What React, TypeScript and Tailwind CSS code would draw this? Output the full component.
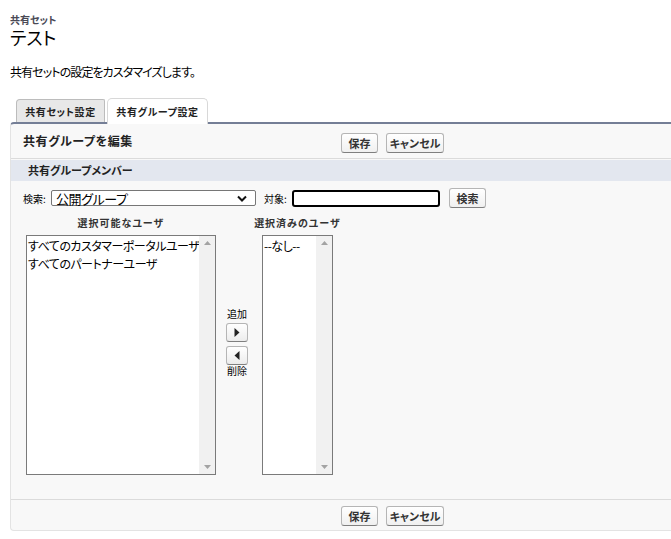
import React from 'react';

function Btn({ children, className = '' }: { children: React.ReactNode; className?: string }) {
  return (
    <button
      className={`h-[20px] rounded-[3px] border border-[#b5b5b5] border-b-[#7f7f7f] bg-linear-to-b from-white to-[#f0f0f0] text-[11px] font-bold leading-none text-[#333] ${className}`}
    >
      {children}
    </button>
  );
}

function ArrowBtn({ dir }: { dir: 'right' | 'left' }) {
  return (
    <button className="flex h-[19px] w-[22px] items-center justify-center rounded-[3px] border border-[#b5b5b5] border-b-[#7f7f7f] bg-linear-to-b from-white to-[#ececec]">
      <svg width="6" height="9" viewBox="0 0 6 9">
        {dir === 'right' ? <path d="M0.5 0 L5.5 4.5 L0.5 9 Z" fill="#222" /> : <path d="M5.5 0 L0.5 4.5 L5.5 9 Z" fill="#222" />}
      </svg>
    </button>
  );
}

function ListBox({ width, items }: { width: string; items: string[] }) {
  return (
    <div className={`flex h-[240px] ${width} border border-[#7a7a7a] bg-white`}>
      <div className="min-w-0 flex-1 pl-[1px] pt-[1px] text-[12px] leading-[18px] tracking-[-0.5px] whitespace-nowrap overflow-hidden">
        {items.map((it) => (
          <div key={it}>{it}</div>
        ))}
      </div>
      <div className="flex w-[16px] flex-col items-center justify-between bg-[#f1f1f1] py-[5px]">
        <svg width="7" height="4" viewBox="0 0 7 4">
          <path d="M0 4 L3.5 0 L7 4 Z" fill="#a3a3a3" />
        </svg>
        <svg width="7" height="4" viewBox="0 0 7 4">
          <path d="M0 0 L7 0 L3.5 4 Z" fill="#a3a3a3" />
        </svg>
      </div>
    </div>
  );
}

export default function App() {
  return (
    <div className="h-[539px] w-[671px] overflow-hidden bg-white font-['Noto_Sans_CJK_JP',sans-serif] text-black [font-feature-settings:'palt']">
      {/* Page title */}
      <div className="pl-[10px] pt-[14px]">
        <div className="text-[10px] font-bold leading-[11px] text-[#4a4a56]">共有セット</div>
        <div className="mt-[3px] text-[18px] leading-[18px]">テスト</div>
      </div>
      <p className="mt-[18px] pl-[10px] text-[12px] leading-[16px] tracking-[-0.9px]">共有セットの設定をカスタマイズします。</p>

      {/* Tabs */}
      <div className="mt-[18px] flex h-[24px] items-end gap-[2px] pl-[16px]">
        <div className="flex h-[23px] w-[89px] items-center justify-center rounded-tl-[4px] rounded-tr-[2px] border border-b-0 border-[#bcbcbc] bg-[#e8e8e8] text-[10px] font-bold tracking-[0.6px] text-[#222]">
          共有セット設定
        </div>
        <div className="relative z-10 -mb-[2px] flex h-[26px] w-[101px] items-start justify-center rounded-t-[5px] border border-b-0 border-[#d8d8d8] bg-white pt-[5px] text-[10px] font-bold tracking-[0.6px] text-[#222]">
          共有グループ設定
        </div>
      </div>

      {/* Panel */}
      <div className="ml-[10px] rounded-tl-[4px] rounded-bl-[4px] border-t-2 border-l border-b border-t-[#747e96] border-l-[#e3e3e3] border-b-[#e3e3e3] bg-[#f8f8f8]">
        <div className="flex h-[34px] items-center">
          <div className="w-[330px] pl-[12px] text-[12px] font-bold tracking-[0.6px] text-[#222]">共有グループを編集</div>
          <div className="flex gap-[8px] pt-[4px]">
            <Btn className="w-[37px]">保存</Btn>
            <Btn className="w-[58px]">キャンセル</Btn>
          </div>
        </div>
        <div className="h-px bg-[#dbdbdb]" />
        <div className="mt-[1px] flex h-[21px] items-center bg-[#e3e7ef] pl-[17px] text-[11px] font-bold text-[#222]">
          共有グループメンバー
        </div>

        {/* Search row */}
        <div className="mt-[7px] flex h-[20px] items-center pl-[12px] text-[10px]">
          <span className="w-[28px] whitespace-nowrap">検索:</span>
          <div className="flex h-[16px] w-[205px] items-center justify-between rounded-[2px] border border-[#767676] bg-white pl-[4px] pr-[8px] text-[13px] leading-none tracking-[-0.4px]">
            <span>公開グループ</span>
            <svg width="10" height="7" viewBox="0 0 10 7">
              <path d="M1 1.5 L5 5.5 L9 1.5" stroke="#111" strokeWidth="2" fill="none" />
            </svg>
          </div>
          <span className="ml-[8px] w-[28px] whitespace-nowrap">対象:</span>
          <div className="h-[17px] w-[148px] rounded-[3px] border-2 border-black bg-white" />
          <Btn className="ml-[9px] w-[37px]">検索</Btn>
        </div>

        {/* Column labels */}
        <div className="mt-[7px] flex h-[14px] items-center text-[10px] font-bold tracking-[1px] text-[#333]">
          <div className="ml-[15px] w-[190px] text-center">選択可能なユーザ</div>
          <div className="ml-[34px] w-[95px] whitespace-nowrap text-center">選択済みのユーザ</div>
        </div>

        {/* Lists */}
        <div className="mt-[6px] flex">
          <div className="ml-[15px]">
            <ListBox width="w-[190px]" items={['すべてのカスタマーポータルユーザ', 'すべてのパートナーユーザ']} />
          </div>
          <div className="flex w-[46px] flex-col items-start pl-[10px] pt-[73px]">
            <div className="w-[22px] text-center text-[10px] leading-[12px]">追加</div>
            <div className="mt-[3px]">
              <ArrowBtn dir="right" />
            </div>
            <div className="mt-[4px]">
              <ArrowBtn dir="left" />
            </div>
            <div className="w-[22px] text-center text-[10px] leading-[12px]">削除</div>
          </div>
          <ListBox width="w-[71px]" items={['--なし--']} />
        </div>

        <div className="mt-[24px] h-px bg-[#dbdbdb]" />
        <div className="flex gap-[8px] pb-[4px] pl-[330px] pt-[6px]">
          <Btn className="w-[37px]">保存</Btn>
          <Btn className="w-[58px]">キャンセル</Btn>
        </div>
      </div>
    </div>
  );
}
